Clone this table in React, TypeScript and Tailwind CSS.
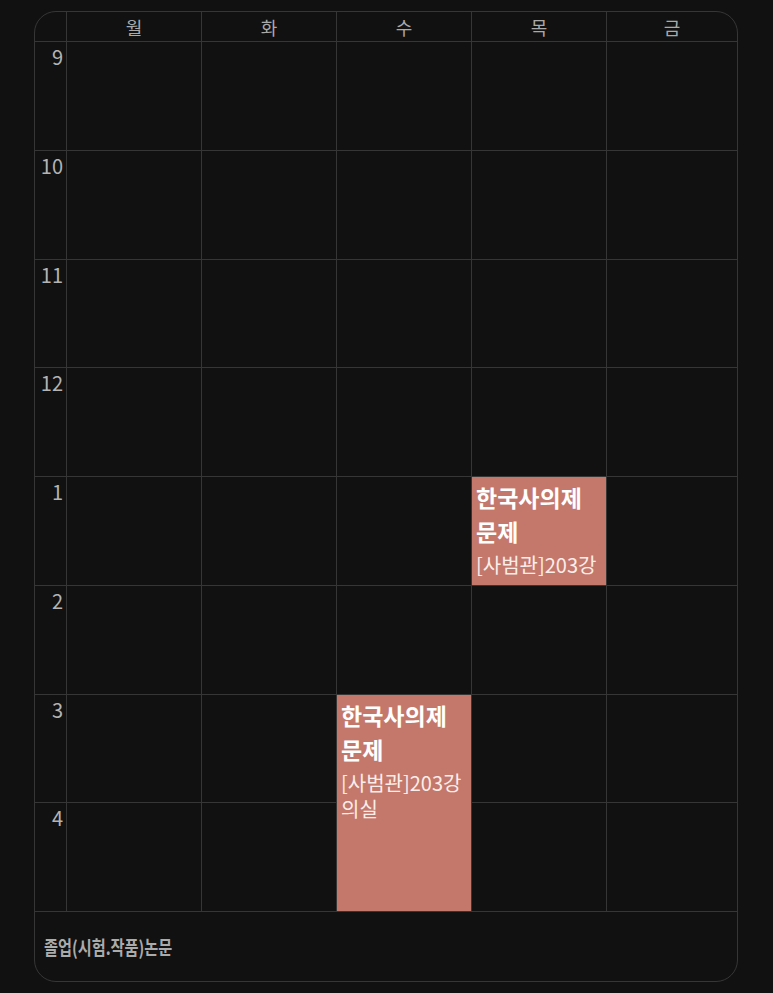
import React from 'react';

const days = ['월', '화', '수', '목', '금'];
const hours = ['9', '10', '11', '12', '1', '2', '3', '4'];

const colStart = ['col-start-2', 'col-start-3', 'col-start-4', 'col-start-5', 'col-start-6'];
const rowStart = ['row-start-2', 'row-start-3', 'row-start-4', 'row-start-5', 'row-start-6', 'row-start-7', 'row-start-8', 'row-start-9'];

type Lecture = { day: number; start: number; span: string; roomClip: string; title: string; room: string };

// 한 시간짜리 칸은 강의실 둘째 줄이 잘려서 안 보임
const lectures: Lecture[] = [
	{ day: 3, start: 4, span: 'row-span-1', roomClip: 'max-h-[26px] overflow-hidden', title: '한국사의제 문제', room: '[사범관]203강의실' },
	{ day: 2, start: 6, span: 'row-span-2', roomClip: '', title: '한국사의제 문제', room: '[사범관]203강의실' },
];

const App = () => {
	return (
		<div className="min-h-[993px] w-[773px] bg-[#111111] pt-[11px] pl-[34px] font-['Noto_Sans_CJK_KR',sans-serif]">
			<div className="w-[704px] overflow-hidden rounded-[22px] border border-[#363636]">
				<div className="grid grid-cols-[32px_135px_135px_135px_135px_1fr] grid-rows-[30px_repeat(8,108.75px)]">
					<div className="col-start-1 row-start-1 border-r border-b border-[#363636]" />
					{days.map((d, i) => (
						<div
							key={d}
							className={`${colStart[i]} row-start-1 flex items-center justify-center border-b border-[#363636] text-[18px] leading-none text-[#a9a9a9] ${i < 4 ? 'border-r' : ''}`}
						>
							{d}
						</div>
					))}
					{hours.map((h, r) => (
						<React.Fragment key={h}>
							<div className={`col-start-1 ${rowStart[r]} border-r border-b border-[#363636] pr-[3px] pt-[3px] text-right text-[20px] leading-[24px] text-[#b4b4b4]`}>
								{h}
							</div>
							{days.map((d, i) => (
								<div
									key={d}
									className={`${colStart[i]} ${rowStart[r]} border-b border-[#363636] ${i < 4 ? 'border-r' : ''}`}
								/>
							))}
						</React.Fragment>
					))}
					{lectures.map((l, idx) => (
						<div
							key={idx}
							className={`${colStart[l.day]} ${rowStart[l.start]} ${l.span} mr-px mb-px overflow-hidden bg-[#c4786c] pl-[4px] pr-[2px] pt-[3px]`}
						>
							<p className="break-keep text-[23px] font-bold leading-[34px] text-white">{l.title}</p>
							<p className={`mt-[4px] break-all text-[20px] leading-[26px] text-[#fbeeea] ${l.roomClip}`}>{l.room}</p>
						</div>
					))}
				</div>
				<div className="flex h-[69px] items-center pl-[9px] pt-[2px]">
					<span className="inline-block origin-left scale-x-[0.8] whitespace-nowrap text-[19px] font-bold text-[#ababab]">
						졸업(시험.작품)논문
					</span>
				</div>
			</div>
		</div>
	);
};

export default App;
